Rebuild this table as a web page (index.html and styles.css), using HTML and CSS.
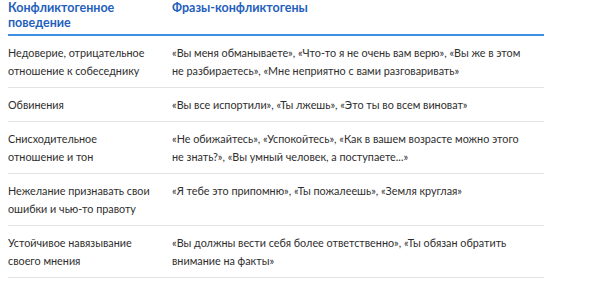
FILE: index.html
```html
<!DOCTYPE html>
<html lang="ru">
<head>
<meta charset="utf-8">
<link rel="stylesheet" href="styles.css">
</head>
<body>
<table class="conflict">
  <thead>
    <tr>
      <th class="c1">Конфликтогенное поведение</th>
      <th class="c2">Фразы-конфликтогены</th>
    </tr>
  </thead>
  <tbody>
    <tr>
      <td>Недоверие, отрицательное отношение к собеседнику</td>
      <td>«Вы меня обманываете», «Что-то я не очень вам верю», «Вы же в этом не разбираетесь», «Мне неприятно с вами разговаривать»</td>
    </tr>
    <tr>
      <td>Обвинения</td>
      <td>«Вы все испортили», «Ты лжешь», «Это ты во всем виноват»</td>
    </tr>
    <tr>
      <td>Снисходительное отношение и тон</td>
      <td>«Не обижайтесь», «Успокойтесь», «Как в вашем возрасте можно этого не знать?», «Вы умный человек, а поступаете...»</td>
    </tr>
    <tr>
      <td>Нежелание признавать свои ошибки и чью-то правоту</td>
      <td>«Я тебе это припомню», «Ты пожалеешь», «Земля круглая»</td>
    </tr>
    <tr>
      <td>Устойчивое навязывание своего мнения</td>
      <td>«Вы должны вести себя более ответственно», «Ты обязан обратить внимание на факты»</td>
    </tr>
  </tbody>
</table>
</body>
</html>
```
FILE: styles.css
```css
body {
  margin: 0;
  padding: 0 0 0 8px;
  background: #fff;
  font-family: "Lato", "Noto Sans", sans-serif;
}
.conflict {
  width: 536px;
  border-collapse: separate;
  border-spacing: 0;
  table-layout: fixed;
}
.conflict th {
  text-align: left;
  vertical-align: top;
  font-size: 12.5px;
  line-height: 15px;
  font-weight: 700;
  color: #1f5fbd;
  padding: 0 0 4px 0;
  border-bottom: 2px solid #3d8fe3;
}
.conflict .c1 { width: 164px; }
.conflict td {
  vertical-align: top;
  font-size: 10.8px;
  line-height: 18px;
  color: #2e2e2e;
  padding: 8px 0 7px 0;
  border-bottom: 1px solid #e3e3e3;
}
.conflict td:first-child { padding-right: 20px; }
.conflict td:last-child { padding-right: 16px; }
```
